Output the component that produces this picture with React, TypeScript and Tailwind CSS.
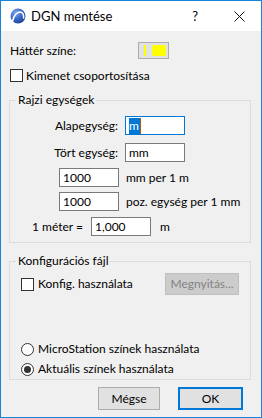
const font = { fontFamily: 'Lato, "Noto Sans", sans-serif' };

const Checkbox = () => (
  <span className="block h-[13px] w-[13px] shrink-0 border border-[#333333] bg-white" />
);

const Radio = ({ checked }: { checked?: boolean }) => (
  <span className="flex h-[13px] w-[13px] shrink-0 items-center justify-center rounded-full border border-[#333333] bg-white">
    {checked && <span className="block h-[7px] w-[7px] rounded-full bg-[#333333]" />}
  </span>
);

const Field = ({ children, focus }: { children?: React.ReactNode; focus?: boolean }) => (
  <div
    className={
      "flex h-[19px] w-[60px] shrink-0 items-center bg-white pl-[3px] " +
      (focus ? "border border-[#0078d7]" : "border border-[#7a7a7a]")
    }
  >
    {children}
  </div>
);

const AppIcon = () => (
  <svg width="16" height="16" viewBox="0 0 16 16">
    <defs>
      <radialGradient id="g" cx="0.35" cy="0.3" r="0.8">
        <stop offset="0" stopColor="#7fa9ee" />
        <stop offset="0.6" stopColor="#2f5fbf" />
        <stop offset="1" stopColor="#1d3f8f" />
      </radialGradient>
    </defs>
    <circle cx="8" cy="8" r="7.5" fill="url(#g)" />
    <path d="M2.5 13.5 C4 6 8 3.5 11 4.2 C13 4.8 13.8 7 13.6 10" fill="none" stroke="#ffffff" strokeWidth="1.6" strokeLinecap="round" />
  </svg>
);

export default function App() {
  return (
    <div
      className="flex h-[418px] w-[262px] flex-col whitespace-nowrap border border-[#1883d7] text-[12px] leading-[16px] text-black"
      style={font}
    >
      {/* title bar */}
      <div className="flex h-[30px] shrink-0 items-center bg-white">
        <div className="ml-[9px]">
          <AppIcon />
        </div>
        <span className="ml-[5px] text-[13px]">DGN mentése</span>
        <span className="ml-auto mr-[36px] text-[13px]">?</span>
        <svg className="mr-[16px]" width="11" height="11" viewBox="0 0 11 11">
          <path d="M0.5 0.5 L10.5 10.5 M10.5 0.5 L0.5 10.5" stroke="#111" strokeWidth="1" />
        </svg>
      </div>

      {/* body */}
      <div className="flex flex-1 flex-col bg-[#f0f0f0] pl-[8px] pr-[10px]">
        <div className="mt-[11px] flex h-[17px] items-center">
          <span className="ml-[1px] w-[128px]">Háttér színe:</span>
          <div className="flex h-[17px] w-[31px] items-center border border-[#adadad] bg-[#e1e1e1]">
            <span className="ml-[5px] block h-[11px] w-[2px] bg-[#ffff00]" />
            <span className="ml-[6px] block h-[11px] w-[14px] rounded-[2px] bg-[#ffff00]" />
          </div>
        </div>

        <div className="mt-[10px] flex h-[13px] items-center">
          <span className="ml-[1px]">
            <Checkbox />
          </span>
          <span className="ml-[3px]">Kimenet csoportosítása</span>
        </div>

        <fieldset className="mt-[10px] h-[151px] border border-[#dcdcdc]">
          <legend className="ml-[6px] px-[2px]">Rajzi egységek</legend>
          <div className="mt-[8px] flex items-center">
            <span className="w-[108px] text-right">Alapegység:</span>
            <div className="ml-[7px]">
              <Field focus>
                <span className="border-r border-[#b85a00] bg-[#0078d7] pr-[1px] text-white">m</span>
              </Field>
            </div>
          </div>
          <div className="mt-[8px] flex items-center">
            <span className="w-[108px] text-right">Tört egység:</span>
            <div className="ml-[7px]">
              <Field>mm</Field>
            </div>
          </div>
          <div className="mt-[6px] flex items-center">
            <div className="ml-[49px]">
              <Field>1000</Field>
            </div>
            <span className="ml-[7px]">mm per 1 m</span>
          </div>
          <div className="mt-[5px] flex items-center">
            <div className="ml-[49px]">
              <Field>1000</Field>
            </div>
            <span className="ml-[7px]">poz. egység per 1 mm</span>
          </div>
          <div className="mt-[6px] flex items-center">
            <span className="w-[73px] text-right">1 méter =</span>
            <div className="ml-[8px]">
              <Field>1,000</Field>
            </div>
            <span className="ml-[9px]">m</span>
          </div>
        </fieldset>

        <fieldset className="mt-[10px] h-[127px] border border-[#dcdcdc]">
          <legend className="ml-[6px] px-[2px]">Konfigurációs fájl</legend>
          <div className="mt-[4px] flex h-[22px] items-center">
            <span className="ml-[11px]">
              <Checkbox />
            </span>
            <span className="ml-[4px]">Konfig. használata</span>
            <div className="ml-auto mr-[11px] flex h-[22px] w-[74px] items-center justify-center border border-[#bfbfbf] bg-[#cccccc] text-[#838383]">
              Megnyitás...
            </div>
          </div>
          <div className="mt-[44px] flex h-[20px] items-center">
            <span className="ml-[11px]">
              <Radio />
            </span>
            <span className="ml-[4px]">MicroStation színek használata</span>
          </div>
          <div className="flex h-[20px] items-center">
            <span className="ml-[11px]">
              <Radio checked />
            </span>
            <span className="ml-[4px]">Aktuális színek használata</span>
          </div>
        </fieldset>

        <div className="mt-[7px] flex h-[23px] items-center">
          <div className="ml-[89px] flex h-[23px] w-[62px] items-center justify-center border border-[#adadad] bg-[#e1e1e1]">
            Mégse
          </div>
          <div className="ml-[18px] flex h-[23px] w-[65px] items-center justify-center border-2 border-[#0078d7] bg-[#e1e1e1]">
            OK
          </div>
        </div>
      </div>
    </div>
  );
}
